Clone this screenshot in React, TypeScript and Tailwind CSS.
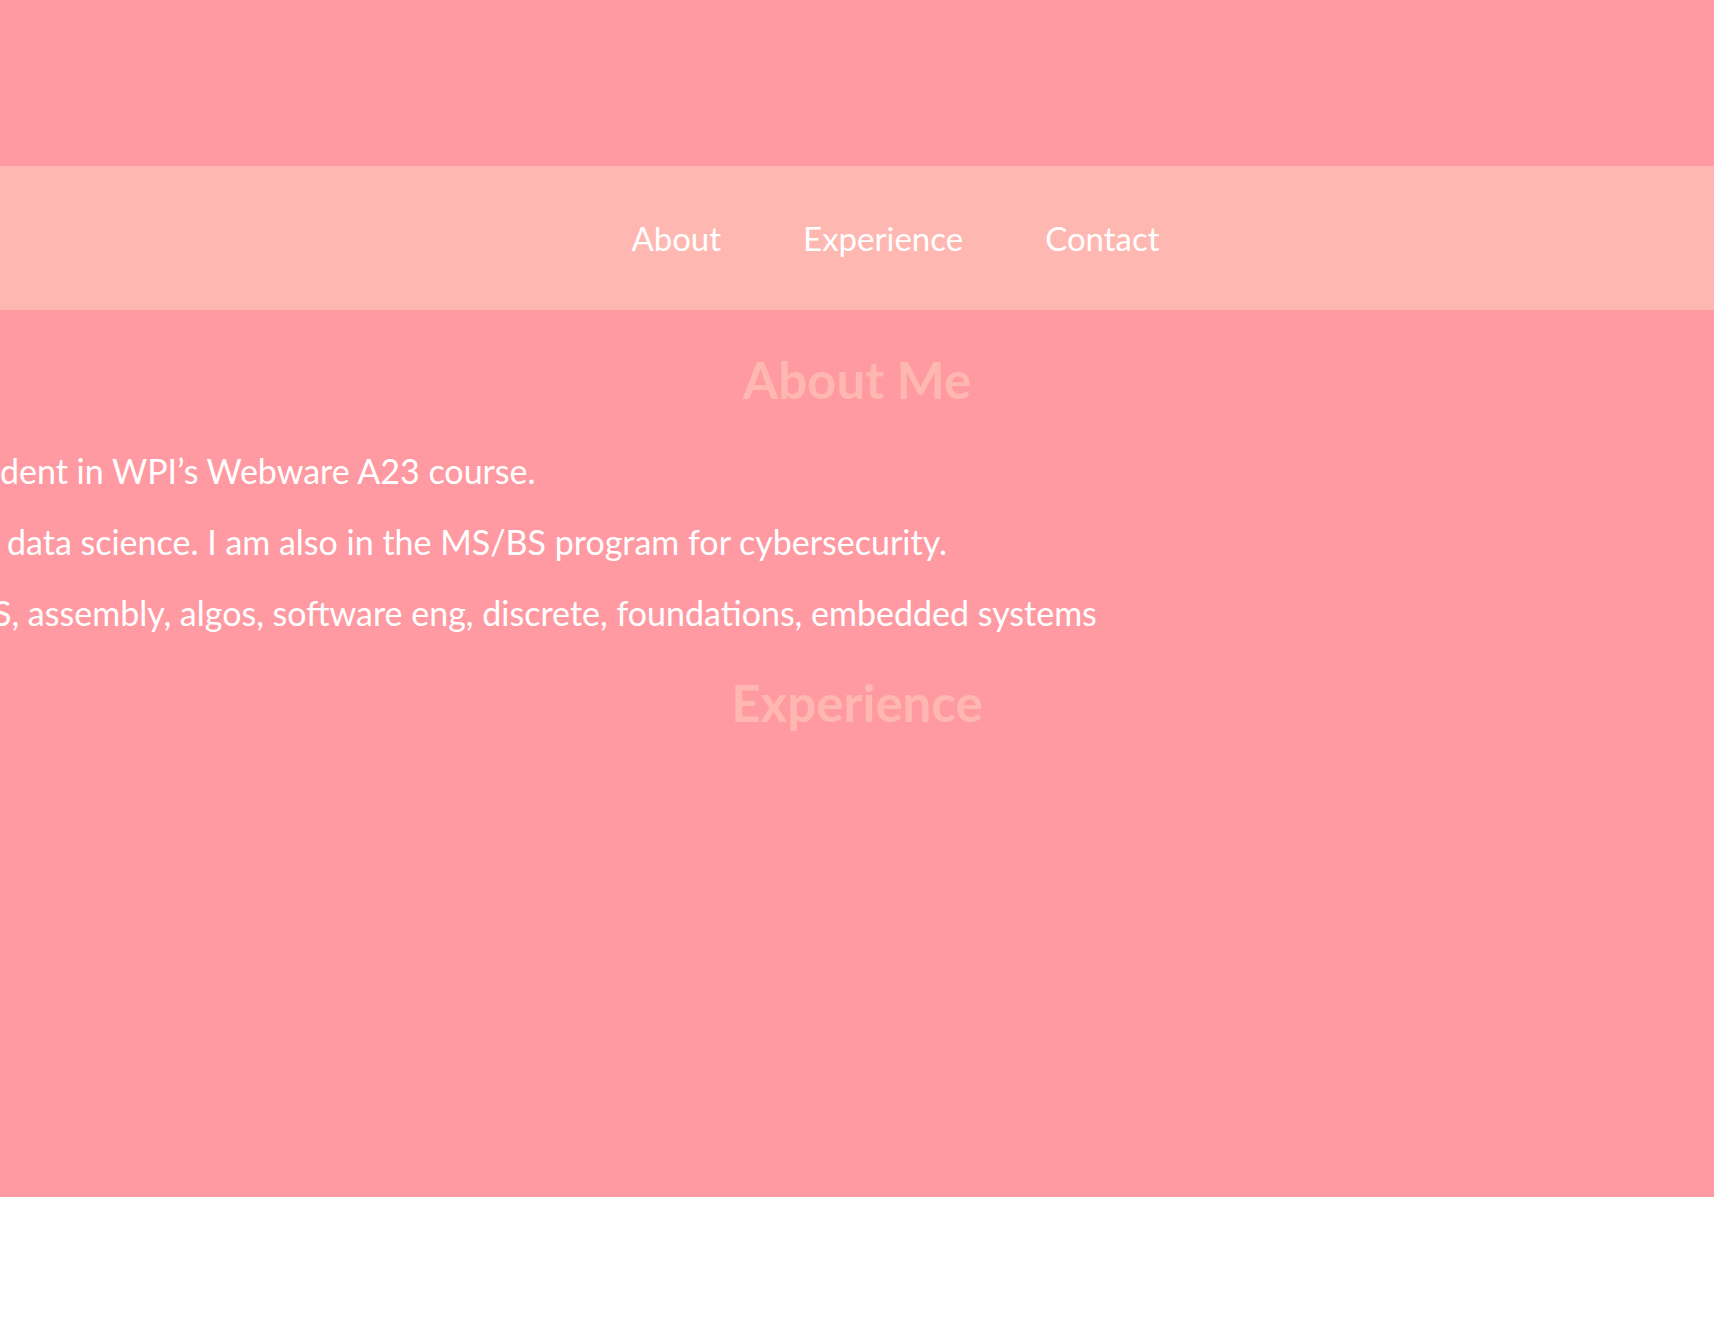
const NAV = ["About", "Experience", "Contact"];

const ABOUT = [
  { hidden: "I am a stu", shown: "dent in WPI’s Webware A23 course.", pad: "pl-0" },
  {
    hidden: "I am a junior studying computer science and",
    shown: "data science. I am also in the MS/BS program for cybersecurity.",
    pad: "pl-[7px]",
  },
  {
    hidden: "Classes I have taken: O",
    shown: "S, assembly, algos, software eng, discrete, foundations, embedded systems",
    pad: "-ml-[7px]",
  },
];

export default function App() {
  return (
    <div className="min-h-screen bg-white font-['Lato',sans-serif]">
      {/* header strip */}
      <header className="h-[166px] bg-[#ff9aa2]" />

      {/* nav */}
      <nav className="flex h-[144px] items-center justify-center gap-[82px] bg-[#ffb7b2] pl-[77px] text-[33px] leading-[40px] text-white">
        {NAV.map((item) => (
          <a key={item} href={`#${item.toLowerCase()}`}>
            {item}
          </a>
        ))}
      </nav>

      {/* main content */}
      <main className="h-[887px] overflow-hidden bg-[#ff9aa2]">
        <h2 className="mt-[41px] text-center text-[51px] font-bold leading-[58px] text-[#ffb7b2]">
          About Me
        </h2>
        <div className="mt-[42px] text-[34px] leading-[40px] text-white">
          {ABOUT.map((line, i) => (
            <p key={i} className={`flex whitespace-nowrap ${line.pad} ${i > 0 ? "mt-[31px]" : ""}`}>
              <span className="flex w-0 justify-end">
                <span>{line.hidden}&nbsp;</span>
              </span>
              <span>{line.shown}</span>
            </p>
          ))}
        </div>
        <h2 className="mt-[41px] text-center text-[51px] font-bold leading-[58px] text-[#ffb7b2]">
          Experience
        </h2>
      </main>
    </div>
  );
}
